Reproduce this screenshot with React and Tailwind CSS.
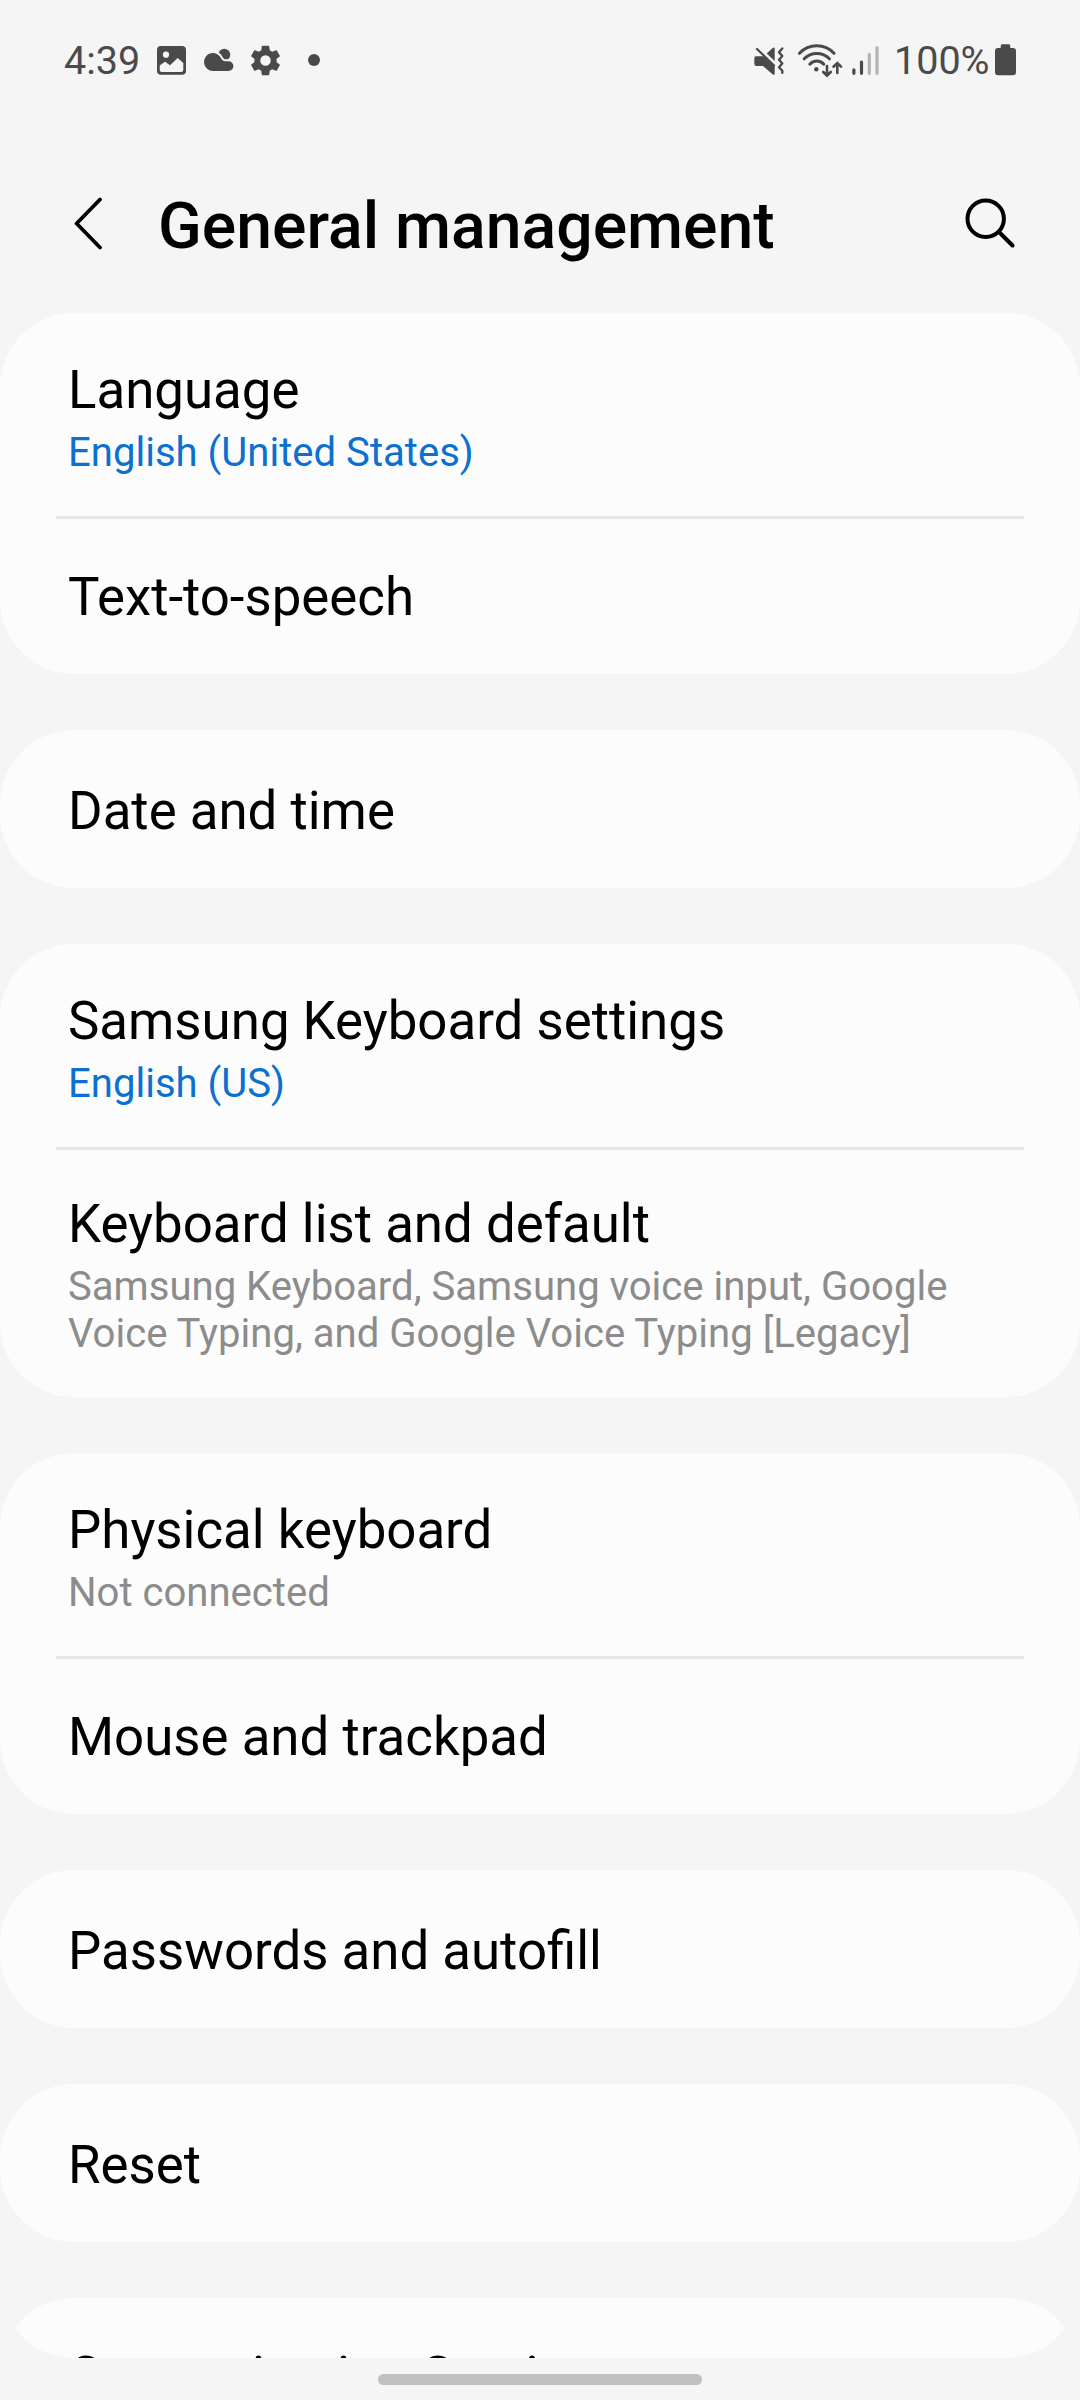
const groups = [
  [
    { title: "Language", value: "English (United States)" },
    { title: "Text-to-speech" },
  ],
  [{ title: "Date and time" }],
  [
    { title: "Samsung Keyboard settings", value: "English (US)" },
    {
      title: "Keyboard list and default",
      note: "Samsung Keyboard, Samsung voice input, Google Voice Typing, and Google Voice Typing [Legacy]",
    },
  ],
  [
    { title: "Physical keyboard", note: "Not connected" },
    { title: "Mouse and trackpad" },
  ],
  [{ title: "Passwords and autofill" }],
  [{ title: "Reset" }],
];

function StatusBar() {
  return (
    <div className="flex h-[120px] items-center justify-between pl-16 pr-[63px] text-[#4a4a4a]">
      <div className="flex items-center">
        <span className="w-[93px] pt-px text-[39.5px] leading-none">4:39</span>
        <svg className="h-[30px] w-[30px]" viewBox="0 0 30 30">
          <rect x="0" y="1" width="29" height="28.7" rx="4" fill="currentColor" />
          <circle cx="9" cy="9.7" r="3.1" fill="#f5f5f5" />
          <path d="M2.700 20.500L8 16.700l5 3.600 7.700-7.300 5.600 5v7a2 2 0 0 1-2 2H4.700a2 2 0 0 1-2-2z" fill="#f5f5f5" />
        </svg>
        <svg className="ml-4 h-[30px] w-[31px]" viewBox="0 0 31 30" fill="currentColor">
          <circle cx="21.300" cy="9.800" r="6" />
          <path
            d="M10 26a9 9 0 1 1 8.300-12.500c.9 1.900 2 2.700 4 2.700h3.200a4.900 4.900 0 0 1 0 9.800z"
            stroke="#f5f5f5"
            strokeWidth="4"
            paintOrder="stroke"
          />
        </svg>
        <svg className="ml-[13px] h-[37px] w-[37px]" viewBox="0 0 24 24" fill="currentColor">
          <path d="M19.140 12.940c.04-.3.060-.61.060-.94 0-.32-.02-.64-.07-.94l2.030-1.580a.49.49 0 0 0 .12-.61l-1.920-3.320a.49.49 0 0 0-.59-.22l-2.390.96a7 7 0 0 0-1.620-.94l-.36-2.540a.48.48 0 0 0-.48-.41h-3.840a.48.48 0 0 0-.47.41l-.36 2.540c-.59.24-1.130.57-1.620.94l-2.390-.96a.48.48 0 0 0-.59.22L2.740 8.870a.48.48 0 0 0 .12.61l2.030 1.580a6 6 0 0 0-.02 1.880l-2.030 1.580a.49.49 0 0 0-.12.61l1.920 3.320c.12.220.37.290.59.220l2.390-.96c.5.380 1.030.7 1.620.94l.36 2.540c.05.24.24.410.48.410h3.840c.24 0 .44-.17.470-.41l.36-2.540a7 7 0 0 0 1.620-.94l2.390.96c.22.080.47 0 .59-.22l1.920-3.320a.48.48 0 0 0-.12-.61zM12 15.400a3.400 3.400 0 1 1 0-6.800 3.400 3.400 0 0 1 0 6.800z" />
        </svg>
        <span className="ml-6 h-3 w-3 rounded-full bg-[#4a4a4a]" />
      </div>

      <div className="flex items-center">
        <svg className="h-[31px] w-[31px]" viewBox="0 0 31 31" fill="none" stroke="currentColor">
          <path d="M12.700 8.500l6-5.500q2-1.300 2 1v12z" fill="currentColor" stroke="none" />
          <path d="M2 11.300h7L20.700 21.500V28q0 3-2.200 1.300L9 21H2.500Q0.300 21 0.300 18.500V13.500Q0.300 11.300 2 11.300z" fill="currentColor" stroke="none" />
          <path d="M3 4l17 16.500" strokeWidth="2.2" strokeLinecap="round" />
          <path d="M28.300 3.500l-3.300 3.700 3.300 3.800-3.300 3.700 3.300 3.800-3.300 3.700 3.300 3.500 0 2" strokeWidth="2.4" strokeLinecap="round" strokeLinejoin="round" />
        </svg>
        <svg className="ml-3 h-[34px] w-[46px]" viewBox="0 0 46 34" fill="none" stroke="currentColor" strokeWidth="3" strokeLinecap="round">
          <path d="M2.500 10.300a23.600 23.600 0 0 1 34.500 0" />
          <path d="M7.200 15.800a17.400 17.400 0 0 1 25.200 0" />
          <path d="M12.800 21.200a9.300 9.300 0 0 1 14 0" />
          <circle cx="19.300" cy="26.300" r="2.200" fill="currentColor" stroke="none" />
          <path d="M30 23v9.500M26.300 29l3.700 3.700 3.700-3.700M40.300 30V20M36.500 23.700l3.800-3.700 3.700 3.700" strokeWidth="2.600" />
        </svg>
        <svg className="ml-[9px] h-[30px] w-[28px]" viewBox="0 0 28 30" strokeWidth="3.200" strokeLinecap="round" stroke="currentColor">
          <path d="M1.900 24.800v3.500M9.500 17v11.300" />
          <path d="M17.300 9.300v19M25 2.600v25.700" stroke="#b3b3b3" />
        </svg>
        <span className="ml-[14px] w-[95px] pt-px text-[39.5px] leading-none">100%</span>
        <svg className="ml-[6px] h-[32px] w-[22px]" viewBox="0 0 22 32" fill="currentColor">
          <path d="M5.700 1.800A1.500 1.500 0 0 1 7.200.3h6.600a1.500 1.500 0 0 1 1.500 1.500V4H18a3 3 0 0 1 3 3v21.300a3 3 0 0 1-3 3H3a3 3 0 0 1-3-3V7a3 3 0 0 1 3-3h2.700z" />
        </svg>
      </div>
    </div>
  );
}

function Header() {
  return (
    <header className="flex h-[193px] items-center pl-[74px] pr-16 pt-[13px]">
      <svg className="h-[53px] w-[29px]" viewBox="0 0 29 53" fill="none" stroke="#000" strokeWidth="3.800" strokeLinecap="round" strokeLinejoin="round">
        <path d="M26 2.500L2.600 26.500l23.400 24" />
      </svg>
      <h1 className="ml-[55px] flex-1 pt-[6px] text-[64.3px] font-medium leading-none">General management</h1>
      <svg className="h-[51px] w-[51px]" viewBox="0 0 51 51" fill="none" stroke="#000" strokeWidth="4" strokeLinecap="round">
        <circle cx="20.700" cy="20.700" r="18.200" />
        <path d="M34 34l13.500 13.500" />
      </svg>
    </header>
  );
}

function Row({ title, value, note }) {
  const hasSub = value || note;
  return (
    <div className={hasSub ? "px-[68px] pt-[45px] pb-10" : "px-[68px] pt-[49px] pb-11"}>
      <p className="text-[52.8px] leading-[65px]">{title}</p>
      {value && <p className="mt-[6px] text-[40.1px] leading-[47px] text-[#0b70d0]">{value}</p>}
      {note && <p className="mt-[6px] text-[40.1px] leading-[47px] text-[#8c8c8c]">{note}</p>}
    </div>
  );
}

export default function App() {
  return (
    <div className="flex h-[2400px] w-[1080px] flex-col overflow-hidden bg-[#f5f5f5] font-['Roboto',sans-serif] text-black">
      <StatusBar />
      <Header />
      <main className="flex flex-col gap-14">
        {groups.map((rows, index) => (
          <section key={index} className="rounded-[74px] bg-[#fcfcfc]">
            {rows.map((row, i) => (
              <div key={row.title}>
                {i > 0 && <div className="mx-14 -mb-[3px] h-[3px] bg-[#e7e7e7]" />}
                <Row {...row} />
              </div>
            ))}
          </section>
        ))}

        {/* Last card, cut by the rounded bottom edge of the list */}
        <div className="flex h-[60px] items-end overflow-hidden">
          <div className="h-[158px] w-full shrink-0 overflow-hidden rounded-b-[74px] pt-[98px]">
            <section className="h-[158px] rounded-t-[74px] bg-[#fcfcfc] px-[68px] pt-[46px]">
              <p className="text-[52.8px] leading-[65px]">Customization Service</p>
            </section>
          </div>
        </div>
      </main>
      <div className="mt-4 h-[11px] w-[324px] self-center rounded-full bg-[#c1c1c1]" />
    </div>
  );
}
